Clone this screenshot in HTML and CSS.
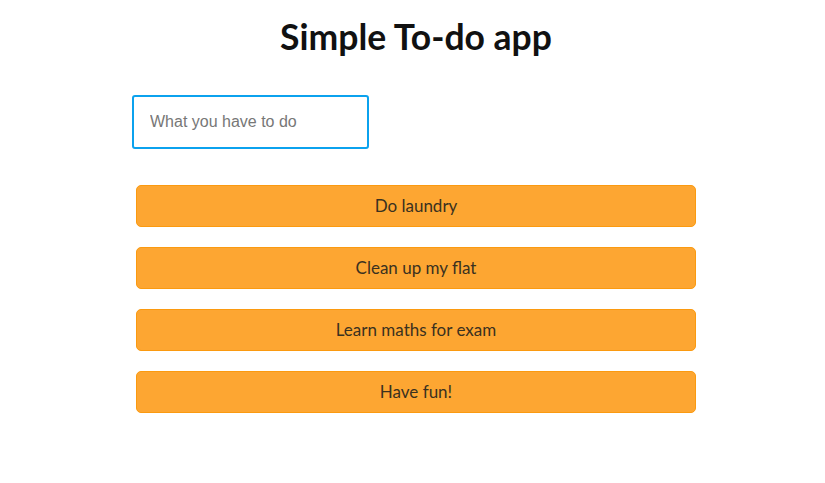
FILE: index.html
```html
<!DOCTYPE html>
<html lang="en">
<head>
<meta charset="utf-8">
<title>Simple To-do app</title>
<link rel="stylesheet" href="styles.css">
</head>
<body>
<main class="app">
  <h1 class="title">Simple To-do app</h1>
  <form class="todo-form">
    <input class="todo-input" type="text" placeholder="What you have to do">
  </form>
  <ul class="todo-list">
    <li class="todo-item">Do laundry</li>
    <li class="todo-item">Clean up my flat</li>
    <li class="todo-item">Learn maths for exam</li>
    <li class="todo-item">Have fun!</li>
  </ul>
</main>
</body>
</html>
```
FILE: styles.css
```css
html, body {
  margin: 0;
  padding: 0;
  background: #ffffff;
}

body {
  font-family: "Lato", "Noto Sans", sans-serif;
  color: #222;
}

.app {
  width: 568px;
  margin-left: 132px;
}

.title {
  margin: 0;
  padding-top: 16px;
  font-size: 35.5px;
  font-weight: 700;
  line-height: 42px;
  text-align: center;
  color: #111;
}

.todo-form {
  margin-top: 37px;
}

.todo-input {
  box-sizing: border-box;
  width: 237px;
  height: 54px;
  padding: 0 16px;
  border: 2px solid #0ba2ee;
  border-radius: 3px;
  font-family: "Liberation Sans", Arial, sans-serif;
  font-size: 16px;
  color: #333;
  outline: none;
}

.todo-input::placeholder {
  color: #777;
}

.todo-list {
  list-style: none;
  margin: 36px 0 0;
  padding: 0 4px;
  display: flex;
  flex-direction: column;
  gap: 20px;
}

.todo-item {
  box-sizing: border-box;
  height: 42px;
  padding-bottom: 2px;
  display: flex;
  align-items: center;
  justify-content: center;
  background: #fda632;
  border: 1px solid #fb9a10;
  border-radius: 5px;
  font-size: 17px;
  color: #3a3120;
}
```
